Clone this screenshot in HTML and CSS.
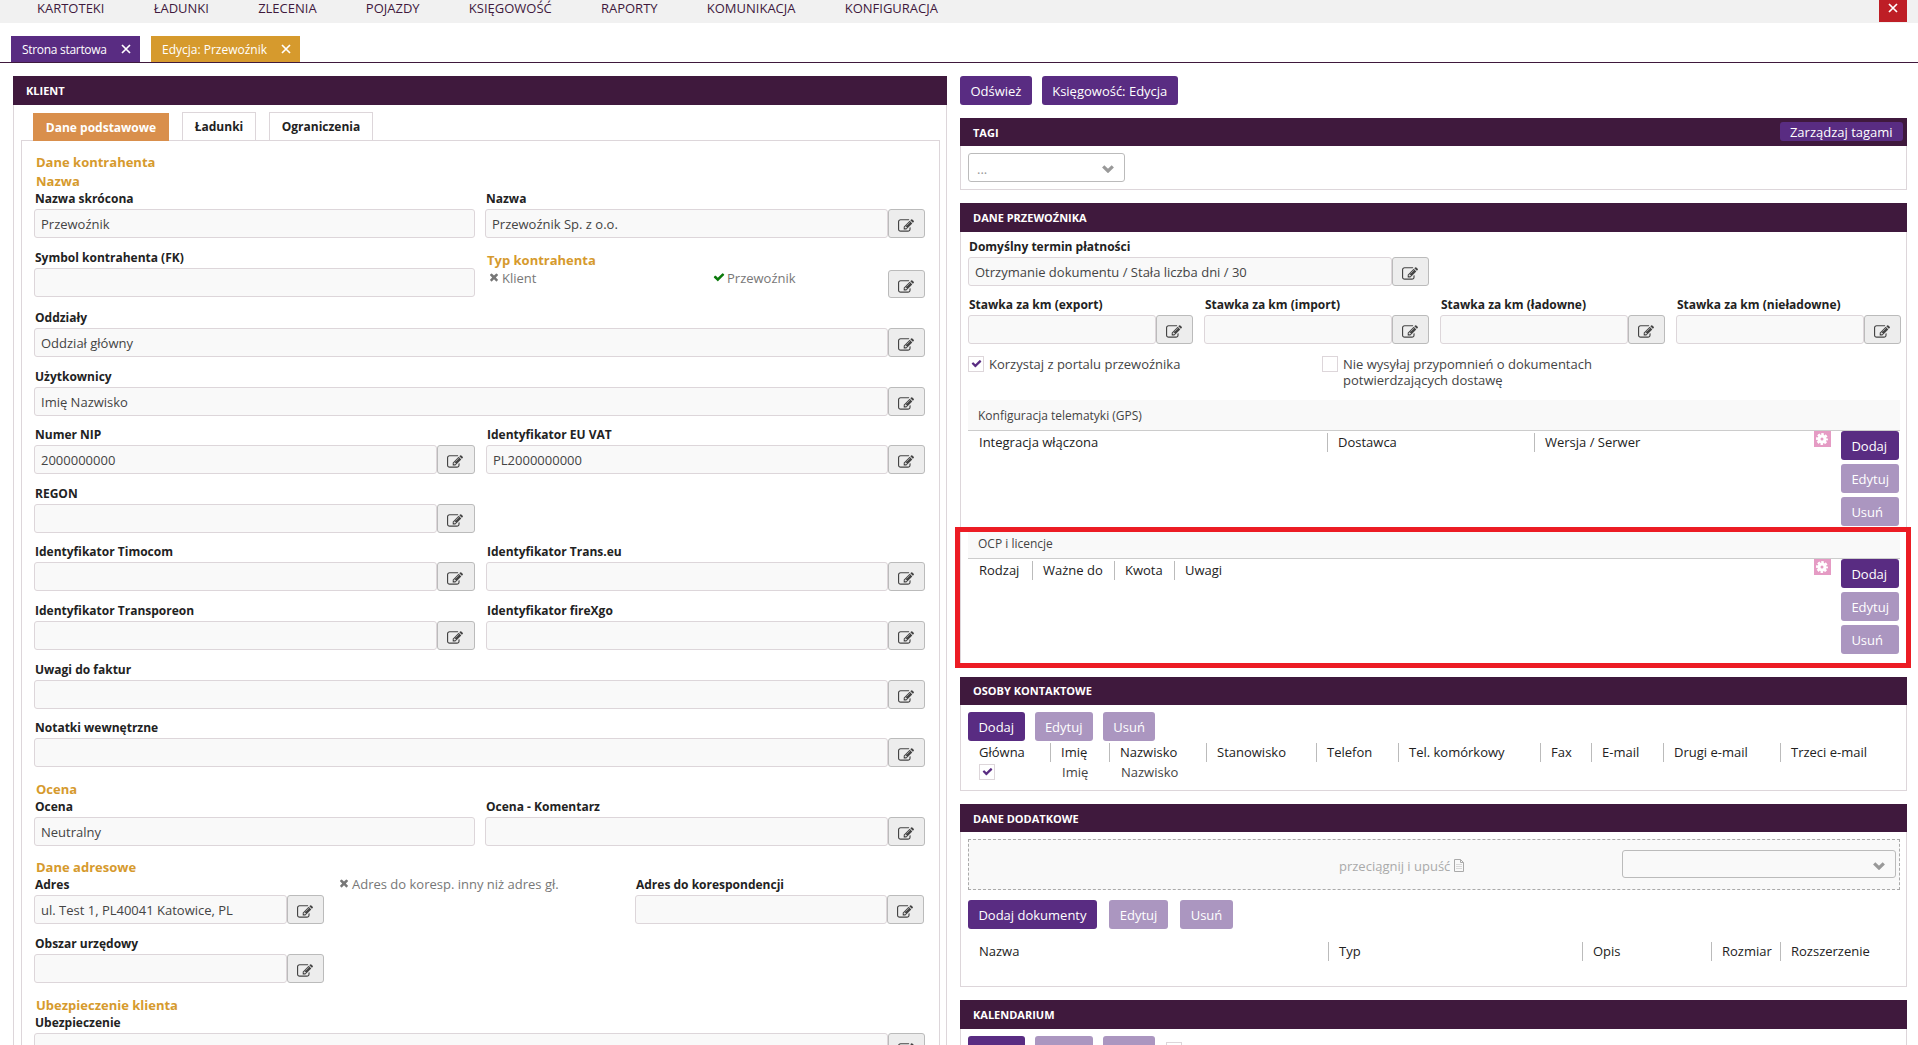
FILE: index.html
```html
<!DOCTYPE html>
<html lang="pl">
<head>
    <meta charset="UTF-8">
    <meta name="viewport" content="width=device-width, initial-scale=1.0">
    <title>Edycja: Przewoźnik</title>
    <link rel="stylesheet" href="styles.css">
</head>
<body>
    <svg class="sprite">
        <symbol id="edit" viewBox="0 0 1792 1792"><path d="M888 1184l116-116-152-152-116 116v56h96v96h56zm440-720q-16-16-33 1l-350 350q-17 17-1 33t33-1l350-350q17-17 1-33zm80 594v190q0 119-84.5 203.5t-203.5 84.5h-832q-119 0-203.5-84.5t-84.5-203.5v-832q0-119 84.5-203.5t203.5-84.5h832q63 0 117 25 15 7 18 23 3 17-9 29l-49 49q-14 14-32 8-23-6-45-6h-832q-66 0-113 47t-47 113v832q0 66 47 113t113 47h832q66 0 113-47t47-113v-126q0-13 9-22l64-64q15-15 35-7t20 29zm-96-738l288 288-672 672h-288v-288zm444 132l-92 92-288-288 92-92q28-28 68-28t68 28l152 152q28 28 28 68t-28 68z"/></symbol>
        <symbol id="check" viewBox="0 0 1792 1792"><path d="M1671 566q0 40-28 68l-724 724-136 136q-28 28-68 28t-68-28l-136-136-362-362q-28-28-28-68t28-68l136-136q28-28 68-28t68 28l294 295 656-657q28-28 68-28t68 28l136 136q28 28 28 68z"/></symbol>
        <symbol id="times" viewBox="0 0 1792 1792"><path d="M1490 1322q0 40-28 68l-136 136q-28 28-68 28t-68-28l-294-294-294 294q-28 28-68 28t-68-28l-136-136q-28-28-28-68t28-68l294-294-294-294q-28-28-28-68t28-68l136-136q28-28 68-28t68 28l294 294 294-294q28-28 68-28t68 28l136 136q28 28 28 68t-28 68l-294 294 294 294q28 28 28 68z"/></symbol>
        <symbol id="chevron" viewBox="0 0 12 8"><path d="M1.2 1.300L6 6L10.800 1.300" fill="none" stroke="currentColor" stroke-width="3.2"/></symbol>
        <symbol id="close" viewBox="0 0 10 10"><path d="M1 1L9 9M9 1L1 9" fill="none" stroke="currentColor" stroke-width="1.7"/></symbol>
        <symbol id="file" viewBox="0 0 10 13"><path d="M.5.5H6.500L9.500 3.500V12.500H.5ZM6.500.5V3.500H9.500" fill="none" stroke="currentColor"/><path d="M2 5.500H8M2 7.500H8M2 9.500H8" fill="none" stroke="currentColor" opacity=".4"/></symbol>
        <symbol id="cog" viewBox="0 0 12 12"><path fill-rule="evenodd" d="M6 1.400a4.600 4.600 0 1 0 0 9.200a4.600 4.600 0 1 0 0-9.200zM6 4.500a1.500 1.500 0 1 1 0 3a1.500 1.500 0 1 1 0-3z"/><circle cx="6" cy="6" r="5" fill="none" stroke="currentColor" stroke-width="1.9" stroke-dasharray="2.5 1.427" stroke-dashoffset="1.250"/></symbol>
    </svg>

    <nav class="menu">
        <a>KARTOTEKI</a>
        <a>ŁADUNKI</a>
        <a>ZLECENIA</a>
        <a>POJAZDY</a>
        <a>KSIĘGOWOŚĆ</a>
        <a>RAPORTY</a>
        <a>KOMUNIKACJA</a>
        <a>KONFIGURACJA</a>
        <button class="logout"><svg><use href="#close"/></svg></button>
    </nav>

    <div class="windows">
        <div class="window home">Strona startowa <svg><use href="#close"/></svg></div>
        <div class="window active">Edycja: Przewoźnik <svg><use href="#close"/></svg></div>
    </div>

    <main class="page">
        <section class="panel client">
            <h2 class="panel-title">KLIENT</h2>
            <div class="tabs">
                <span class="tab selected">Dane podstawowe</span>
                <span class="tab tab-loads">Ładunki</span>
                <span class="tab tab-limits">Ograniczenia</span>
            </div>
            <div class="form">
                <h3>Dane kontrahenta</h3>
                <h3 class="name">Nazwa</h3>
                <div class="row two tall">
                    <div class="field">
                        <label>Nazwa skrócona</label>
                        <div class="control"><span class="value">Przewoźnik</span></div>
                    </div>
                    <div class="field">
                        <label>Nazwa</label>
                        <div class="control"><span class="value">Przewoźnik Sp. z o.o.</span><button class="edit"><svg><use href="#edit"/></svg></button></div>
                    </div>
                </div>
                <div class="row two taller">
                    <div class="field">
                        <label>Symbol kontrahenta (FK)</label>
                        <div class="control"><span class="value"></span></div>
                    </div>
                    <div class="types">
                        <div class="types-list">
                            <h3>Typ kontrahenta</h3>
                            <div class="flags">
                                <span class="flag"><svg><use href="#times"/></svg>Klient</span>
                                <span class="flag yes"><svg><use href="#check"/></svg>Przewoźnik</span>
                            </div>
                        </div>
                        <button class="edit"><svg><use href="#edit"/></svg></button>
                    </div>
                </div>
                <div class="row tall">
                    <div class="field">
                        <label>Oddziały</label>
                        <div class="control"><span class="value">Oddział główny</span><button class="edit"><svg><use href="#edit"/></svg></button></div>
                    </div>
                </div>
                <div class="row short">
                    <div class="field">
                        <label>Użytkownicy</label>
                        <div class="control"><span class="value">Imię Nazwisko</span><button class="edit"><svg><use href="#edit"/></svg></button></div>
                    </div>
                </div>
                <div class="row two ids">
                    <div class="field">
                        <label>Numer NIP</label>
                        <div class="control"><span class="value">2000000000</span><button class="edit"><svg><use href="#edit"/></svg></button></div>
                    </div>
                    <div class="field">
                        <label>Identyfikator EU VAT</label>
                        <div class="control"><span class="value">PL2000000000</span><button class="edit"><svg><use href="#edit"/></svg></button></div>
                    </div>
                </div>
                <div class="row two ids">
                    <div class="field">
                        <label>REGON</label>
                        <div class="control"><span class="value"></span><button class="edit"><svg><use href="#edit"/></svg></button></div>
                    </div>
                </div>
                <div class="row two ids">
                    <div class="field">
                        <label>Identyfikator Timocom</label>
                        <div class="control"><span class="value"></span><button class="edit"><svg><use href="#edit"/></svg></button></div>
                    </div>
                    <div class="field">
                        <label>Identyfikator Trans.eu</label>
                        <div class="control"><span class="value"></span><button class="edit"><svg><use href="#edit"/></svg></button></div>
                    </div>
                </div>
                <div class="row two ids">
                    <div class="field">
                        <label>Identyfikator Transporeon</label>
                        <div class="control"><span class="value"></span><button class="edit"><svg><use href="#edit"/></svg></button></div>
                    </div>
                    <div class="field">
                        <label>Identyfikator fireXgo</label>
                        <div class="control"><span class="value"></span><button class="edit"><svg><use href="#edit"/></svg></button></div>
                    </div>
                </div>
                <div class="row">
                    <div class="field">
                        <label>Uwagi do faktur</label>
                        <div class="control"><span class="value"></span><button class="edit"><svg><use href="#edit"/></svg></button></div>
                    </div>
                </div>
                <div class="row">
                    <div class="field">
                        <label>Notatki wewnętrzne</label>
                        <div class="control"><span class="value"></span><button class="edit"><svg><use href="#edit"/></svg></button></div>
                    </div>
                </div>

                <h3 class="next">Ocena</h3>
                <div class="row two">
                    <div class="field">
                        <label>Ocena</label>
                        <div class="control"><span class="value">Neutralny</span></div>
                    </div>
                    <div class="field">
                        <label>Ocena - Komentarz</label>
                        <div class="control"><span class="value"></span><button class="edit"><svg><use href="#edit"/></svg></button></div>
                    </div>
                </div>

                <h3 class="next">Dane adresowe</h3>
                <div class="row address">
                    <div class="field">
                        <label>Adres</label>
                        <div class="control"><span class="value">ul. Test 1, PL40041 Katowice, PL</span><button class="edit"><svg><use href="#edit"/></svg></button></div>
                    </div>
                    <span class="flag"><svg><use href="#times"/></svg>Adres do koresp. inny niż adres gł.</span>
                    <div class="field">
                        <label>Adres do korespondencji</label>
                        <div class="control"><span class="value"></span><button class="edit"><svg><use href="#edit"/></svg></button></div>
                    </div>
                </div>
                <div class="row address">
                    <div class="field">
                        <label>Obszar urzędowy</label>
                        <div class="control"><span class="value"></span><button class="edit"><svg><use href="#edit"/></svg></button></div>
                    </div>
                </div>

                <h3 class="next">Ubezpieczenie klienta</h3>
                <div class="row">
                    <div class="field">
                        <label>Ubezpieczenie</label>
                        <div class="control"><span class="value"></span><button class="edit"><svg><use href="#edit"/></svg></button></div>
                    </div>
                </div>
            </div>
        </section>

        <div class="side">
            <div class="toolbar">
                <button class="btn">Odśwież</button>
                <button class="btn">Księgowość: Edycja</button>
            </div>

            <section class="panel tags">
                <h2 class="panel-title low">TAGI <button class="btn small">Zarządzaj tagami</button></h2>
                <div class="panel-body">
                    <div class="select">... <svg><use href="#chevron"/></svg></div>
                </div>
            </section>

            <section class="panel carrier">
                <h2 class="panel-title">DANE PRZEWOŹNIKA</h2>
                <div class="panel-body">
                    <div class="row rates">
                        <div class="field term">
                            <label>Domyślny termin płatności</label>
                            <div class="control"><span class="value">Otrzymanie dokumentu / Stała liczba dni / 30</span><button class="edit"><svg><use href="#edit"/></svg></button></div>
                        </div>
                    </div>
                    <div class="row rates">
                        <div class="field">
                            <label>Stawka za km (export)</label>
                            <div class="control"><span class="value"></span><button class="edit"><svg><use href="#edit"/></svg></button></div>
                        </div>
                        <div class="field">
                            <label>Stawka za km (import)</label>
                            <div class="control"><span class="value"></span><button class="edit"><svg><use href="#edit"/></svg></button></div>
                        </div>
                        <div class="field">
                            <label>Stawka za km (ładowne)</label>
                            <div class="control"><span class="value"></span><button class="edit"><svg><use href="#edit"/></svg></button></div>
                        </div>
                        <div class="field">
                            <label>Stawka za km (nieładowne)</label>
                            <div class="control"><span class="value"></span><button class="edit"><svg><use href="#edit"/></svg></button></div>
                        </div>
                    </div>
                    <div class="options">
                        <div class="option"><span class="checkbox"><svg><use href="#check"/></svg></span>Korzystaj z portalu przewoźnika</div>
                        <div class="option"><span class="checkbox"></span><span>Nie wysyłaj przypomnień o dokumentach<br>potwierdzających dostawę</span></div>
                    </div>

                    <div class="group">
                        <h4>Konfiguracja telematyki (GPS)</h4>
                        <div class="group-body">
                            <div class="table table-gps">
                                <span>Integracja włączona</span>
                                <span>Dostawca</span>
                                <span>Wersja / Serwer</span>
                            </div>
                            <span class="cog"><svg><use href="#cog"/></svg></span>
                            <div class="actions">
                                <button class="btn">Dodaj</button>
                                <button class="btn off">Edytuj</button>
                                <button class="btn off">Usuń</button>
                            </div>
                        </div>
                    </div>

                    <div class="group marked">
                        <h4>OCP i licencje</h4>
                        <div class="group-body">
                            <div class="table table-ocp">
                                <span>Rodzaj</span>
                                <span>Ważne do</span>
                                <span>Kwota</span>
                                <span>Uwagi</span>
                            </div>
                            <span class="cog"><svg><use href="#cog"/></svg></span>
                            <div class="actions">
                                <button class="btn">Dodaj</button>
                                <button class="btn off">Edytuj</button>
                                <button class="btn off">Usuń</button>
                            </div>
                        </div>
                    </div>
                </div>
            </section>

            <section class="panel contacts">
                <h2 class="panel-title low">OSOBY KONTAKTOWE</h2>
                <div class="panel-body">
                    <div class="buttons">
                        <button class="btn">Dodaj</button>
                        <button class="btn off">Edytuj</button>
                        <button class="btn off">Usuń</button>
                    </div>
                    <div class="table table-contacts">
                        <span>Główna</span>
                        <span>Imię</span>
                        <span>Nazwisko</span>
                        <span>Stanowisko</span>
                        <span>Telefon</span>
                        <span>Tel. komórkowy</span>
                        <span>Fax</span>
                        <span>E-mail</span>
                        <span>Drugi e-mail</span>
                        <span>Trzeci e-mail</span>
                    </div>
                    <div class="table table-contacts data">
                        <span><i class="checkbox"><svg><use href="#check"/></svg></i></span>
                        <span>Imię</span>
                        <span>Nazwisko</span>
                    </div>
                </div>
            </section>

            <section class="panel extra">
                <h2 class="panel-title low">DANE DODATKOWE</h2>
                <div class="panel-body">
                    <div class="dropzone">
                        <span class="drop-text">przeciągnij i upuść <svg><use href="#file"/></svg></span>
                        <div class="select"><svg><use href="#chevron"/></svg></div>
                    </div>
                    <div class="buttons wide">
                        <button class="btn">Dodaj dokumenty</button>
                        <button class="btn off">Edytuj</button>
                        <button class="btn off">Usuń</button>
                    </div>
                    <div class="table table-docs">
                        <span>Nazwa</span>
                        <span>Typ</span>
                        <span>Opis</span>
                        <span>Rozmiar</span>
                        <span>Rozszerzenie</span>
                    </div>
                </div>
            </section>

            <section class="panel calendar">
                <h2 class="panel-title">KALENDARIUM</h2>
                <div class="panel-body">
                    <div class="buttons">
                        <button class="btn">Dodaj</button>
                        <button class="btn off">Edytuj</button>
                        <button class="btn off">Usuń</button>
                        <span class="checkbox"></span>
                    </div>
                </div>
            </section>
        </div>
    </main>
</body>
</html>
```
FILE: styles.css
```css
* {
    box-sizing: border-box;
}

html {
    height: 1045px;
    overflow: hidden;
}

body {
    margin: 0;
    height: 1045px;
    overflow: hidden;
    background: #fff;
    color: #444;
    font-family: "Open Sans", "Noto Sans", sans-serif;
    font-size: 13px;
    line-height: 16px;
}

button {
    font: inherit;
    margin: 0;
    padding: 0;
    border: 0;
}

svg {
    fill: currentColor;
    flex: none;
}

.sprite {
    display: none;
}

/* menu */
.menu {
    height: 23px;
    background: #f1f1f1;
    color: #3f193d;
    display: flex;
    gap: 49.2px;
    padding: 0 11px 0 37px;
}

.menu a {
    white-space: nowrap;
}

.logout {
    width: 28px;
    height: 22px;
    margin-left: auto;
    background: #be1e26;
    color: #fff;
}

.logout svg {
    display: block;
    width: 10px;
    height: 10px;
    margin: -6px auto 0;
}

.windows {
    height: 40px;
    padding: 13px 11px 0;
    border-bottom: 1px solid #3f193d;
    display: flex;
    gap: 11px;
}

.window {
    width: 129px;
    padding: 0 9px 0 11px;
    background: #592c82;
    color: #fff;
    font-size: 12px;
    line-height: 27px;
    display: flex;
    align-items: center;
    justify-content: space-between;
    white-space: nowrap;
}

.window.home {
    letter-spacing: -0.3px;
}

.window.active {
    width: 149px;
    background: #d69a2d;
}

.window svg {
    width: 10px;
    height: 10px;
}

/* panels */
.page {
    display: flex;
    gap: 13px;
    height: 982px;
    overflow: hidden;
    padding: 13px 11px 0 13px;
}

.panel {
    border: 1px solid #ddd6da;
    border-top: 0;
}

.panel-title {
    height: 29px;
    margin: 0 -1px;
    padding: 0 13px;
    background: #3f193d;
    color: #fff;
    font-size: 11px;
    font-weight: 700;
    line-height: 30px;
    display: flex;
    justify-content: space-between;
    align-items: flex-start;
}

.panel-title.low {
    height: 28px;
}

.panel-body {
    padding: 7px;
}

.client {
    width: 934px;
    height: 1000px;
    padding: 0 6px 0 7px;
}

.client .panel-title {
    margin: 0 -7px 0 -8px;
}

.tabs {
    height: 35px;
    padding: 7px 0 0 12px;
    display: flex;
    gap: 13px;
    color: #222;
    font-size: 12px;
    font-weight: 700;
    line-height: 28px;
}

.tab {
    height: 28px;
    border: 1px solid #ddd6da;
    border-bottom: 0;
    text-align: center;
}

.tab.selected {
    width: 136px;
    margin-top: 1px;
    border: 0;
    background: #d98f4c;
    color: #fff;
    line-height: 29px;
    position: relative;
}

.tab-loads {
    width: 74px;
}

.tab-limits {
    width: 104px;
}

.form {
    height: 1000px;
    border: 1px solid #ddd6da;
    padding: 12px 14px 0 12px;
}

h3 {
    margin: 0 0 0 2px;
    color: #d69a2d;
    font-size: 13px;
    font-weight: 700;
    line-height: 18.5px;
}

h3.name {
    margin-bottom: 1px;
}

h3.next {
    margin-top: 1.2px;
}

.row {
    display: grid;
    grid-template-columns: 1fr;
    height: 58.65px;
}

.row.short {
    height: 58px;
}

.row.tall {
    height: 59px;
}

.row.taller {
    height: 60px;
}

.row.two {
    grid-template-columns: 441px 440px;
    gap: 10px;
}

.row.ids {
    grid-template-columns: 441px 439px;
    gap: 11px;
}

.row.address {
    grid-template-columns: 290px 281px 289px;
    column-gap: 15px;
    height: 59px;
}

.row label {
    display: block;
    margin: 0 0 2px 1px;
    color: #222;
    font-size: 12px;
    font-weight: 700;
    line-height: 16px;
    white-space: nowrap;
}

.control {
    display: flex;
    height: 29px;
}

.value {
    flex: 1;
    padding-left: 6px;
    border: 1px solid #ddd6da;
    border-radius: 3px;
    background: #f9f9f9;
    line-height: 28px;
    white-space: nowrap;
}

.edit {
    flex: none;
    width: 37px;
    height: 29px;
    border: 1px solid #bbb;
    border-radius: 3px;
    background: #ededed;
    color: #444;
}

.ids .field:first-child .edit {
    width: 38px;
}

.edit svg {
    display: block;
    width: 16px;
    height: 16px;
    margin: 5px 0 0 9px;
}

.types {
    display: flex;
    justify-content: space-between;
}

.types .edit {
    margin-top: 20px;
    height: 28px;
}

.types-list {
    padding-top: 1px;
}

.flags {
    display: grid;
    grid-template-columns: 225px auto;
    padding-left: 3px;
}

.flag {
    display: flex;
    color: #777;
    white-space: nowrap;
}

.flag svg {
    width: 12px;
    height: 12px;
    margin: 1px 2px 0 0;
}

.flag.yes svg {
    color: #0b7a0b;
}

.address .flag {
    margin: -1px 0 0 -1px;
}

/* buttons */
.btn {
    height: 29px;
    padding: 0 10.4px;
    border-radius: 3px;
    background: #592c82;
    color: #fff;
    font-weight: 500;
    line-height: 30px;
    white-space: nowrap;
    text-align: left;
}

.btn.off {
    background: #ab96c0;
}

.btn.small {
    height: 19px;
    margin: 4px -9px 0 0;
    font-size: 13px;
    line-height: 18px;
}

.side {
    width: 947px;
}

.toolbar {
    display: flex;
    gap: 10px;
    margin-bottom: 13px;
}

.side .panel {
    margin-bottom: 13px;
}

.tags {
    height: 72px;
}

.select {
    width: 157px;
    height: 29px;
    padding: 0 10px 0 8px;
    border: 1px solid #bbb;
    border-radius: 3px;
    color: #999;
    display: flex;
    justify-content: space-between;
    line-height: 30px;
}

.select svg {
    width: 12px;
    height: 8px;
    margin: 11px 0 0 auto;
}

.carrier {
    height: 461px;
}

.rates {
    grid-template-columns: repeat(4, 225px);
    column-gap: 11px;
    height: 58px;
}

.term {
    grid-column: span 2;
}

.options {
    display: grid;
    grid-template-columns: 354px auto;
    height: 45px;
    padding-top: 1px;
}

.option {
    display: flex;
    gap: 5px;
}

.checkbox {
    display: block;
    flex: none;
    width: 16px;
    height: 16px;
    border: 1px solid #ddd6da;
    background: #fff;
    color: #592c82;
}

.checkbox svg {
    display: block;
    width: 11px;
    height: 11px;
    margin: 1px 0 0 2px;
}

.group {
    height: 128px;
}

.group h4 {
    height: 31px;
    margin: 0 -1px 0 0;
    padding-left: 10px;
    border-bottom: 1px solid #ccc;
    background: #f9f9f9;
    font-size: 12px;
    font-weight: 400;
    line-height: 31px;
}

.group-body {
    display: flex;
}

.group .table {
    width: 846px;
    padding-top: 2px;
}

.cog {
    width: 17px;
    height: 16px;
    margin-right: 10px;
    background: #e59bc4;
    color: #fff;
}

.cog svg {
    display: block;
    width: 12px;
    height: 12px;
    margin: 2px;
}

.actions {
    width: 58px;
    display: grid;
    gap: 4px;
}

/* red frame around the group */
.marked {
    position: relative;
    height: 136px;
}

.marked::after {
    content: "";
    position: absolute;
    inset: -1px -12px -4px -13px;
    border: 5px solid #ec1c24;
}

.buttons {
    display: flex;
    gap: 10px;
}

.buttons.wide {
    gap: 12.5px;
    margin: 10px 0 11px;
}

.buttons .checkbox {
    margin: 6px 0 0 1px;
}

/* tables */
.table {
    display: grid;
    height: 21px;
    padding-top: 2px;
    color: #222;
}

.table span {
    height: 19px;
    padding-left: 10px;
    border-left: 1px solid #bbb;
    line-height: 18px;
    white-space: nowrap;
}

.table span:first-child {
    border-left-color: transparent;
}

.table-gps {
    grid-template-columns: 359px 207px auto;
}

.table-ocp {
    grid-template-columns: 64px 82px 60px auto;
}

.table-contacts {
    grid-template-columns: 82px 59px 97px 110px 82px 142px 51px 72px 117px auto;
}

.table-docs {
    grid-template-columns: 360px 254px 129px 69px auto;
}

.table.data span {
    border-color: transparent;
    padding-left: 11px;
    color: #444;
    line-height: 16px;
}

.table.data span:first-child {
    padding-left: 10px;
}

.contacts {
    height: 114px;
}

.contacts .panel-title {
    line-height: 28px;
}

.extra {
    height: 183px;
}

.dropzone {
    height: 51px;
    margin-right: -1px;
    padding: 10px 3px 0 370px;
    border: 1px dashed #aaa;
    background: #f9f9f9;
    color: #aaa;
    display: flex;
    justify-content: space-between;
}

.drop-text {
    padding-top: 8px;
}

.drop-text svg {
    width: 10px;
    height: 13px;
    vertical-align: -1px;
}

.dropzone .select {
    width: 274px;
    height: 28px;
}
```
